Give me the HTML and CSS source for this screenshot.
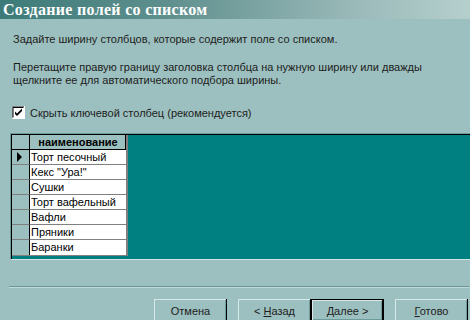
FILE: index.html
```html
<!DOCTYPE html>
<html lang="ru">
<head>
  <meta charset="UTF-8">
  <title>Создание полей со списком</title>
  <link rel="stylesheet" href="styles.css">
</head>
<body>
  <div class="window">
    <div class="titlebar">Создание полей со списком</div>
    <div class="content">
      <p class="hint first">Задайте ширину столбцов, которые содержит поле со списком.</p>
      <p class="hint">Перетащите правую границу заголовка столбца на нужную ширину или дважды<br>щелкните ее для автоматического подбора ширины.</p>
      <label class="check">
        <svg class="box" width="13" height="13" viewBox="0 0 13 13">
          <rect x="0" y="0" width="13" height="13" fill="#fff"/>
          <path d="M0 12.5V0.5H12.5" stroke="#808080" fill="none"/>
          <path d="M1 11.5V1.5H11.5" stroke="#000" fill="none"/>
          <path d="M0.5 13V12.5H12.5V0" stroke="#fff" fill="none"/>
          <path d="M3 5.5l2 2 5-5v2.5l-5 5-2-2z" fill="#000"/>
        </svg>
        <span>Скрыть ключевой столбец (рекомендуется)</span>
      </label>
    </div>

    <div class="grid-wrap">
      <div class="grid">
        <div class="sheet">
          <div class="row head">
            <div class="sel"></div>
            <div class="cell">наименование</div>
          </div>
          <div class="row">
            <div class="sel current"><span class="arrow"></span></div>
            <div class="cell">Торт песочный</div>
          </div>
          <div class="row"><div class="sel"></div><div class="cell">Кекс "Ура!"</div></div>
          <div class="row"><div class="sel"></div><div class="cell">Сушки</div></div>
          <div class="row"><div class="sel"></div><div class="cell">Торт вафельный</div></div>
          <div class="row"><div class="sel"></div><div class="cell">Вафли</div></div>
          <div class="row"><div class="sel"></div><div class="cell">Пряники</div></div>
          <div class="row"><div class="sel"></div><div class="cell">Баранки</div></div>
        </div>
      </div>
    </div>

    <div class="separator"></div>

    <div class="buttons">
      <button class="btn">Отмена</button>
      <div class="pair">
        <button class="btn">&lt; <u>Н</u>азад</button>
        <button class="btn default"><u>Д</u>алее &gt;</button>
      </div>
      <button class="btn"><u>Г</u>отово</button>
    </div>
  </div>
</body>
</html>
```

FILE: styles.css
```css
body {
  margin: 0;
  padding: 0;
  background-color: #9cc0bf;
  font-family: "Liberation Sans", Arial, sans-serif;
  font-size: 11px;
  color: #1c1c1c;
}
.window {
  width: 470px;
  height: 320px;
  overflow: hidden;
  display: flex;
  flex-direction: column;
}
.titlebar {
  height: 19px;
  line-height: 19px;
  padding-left: 3px;
  background: linear-gradient(to right, #3c7b79, #5e8f8d 35%, #99b9b8 75%, #b5cfcd);
  color: #fff;
  font-family: "Liberation Serif", "Times New Roman", serif;
  font-weight: bold;
  font-size: 16px;
  letter-spacing: 0.3px;
  white-space: nowrap;
}
.content {
  padding-left: 13px;
}
.hint {
  margin: 15px 0 0;
  line-height: 13px;
}
.hint.first {
  margin-top: 14px;
}
.check {
  display: flex;
  align-items: center;
  gap: 5px;
  margin-top: 19px;
  margin-left: -1px;
  height: 13px;
}
.box {
  display: block;
}
.grid-wrap {
  margin: 14px 0 0 10px;
  border-top: 1px solid #6b9b9a;
  border-left: 1px solid #6b9b9a;
  border-bottom: 1px solid #d2e4e3;
}
.grid {
  height: 124px;
  background-color: #008080;
  border-top: 1px solid #000;
  border-left: 1px solid #000;
}
.sheet {
  width: 114px;
  border-right: 2px solid #808080;
  border-bottom: 1px solid #808080;
}
.row {
  display: flex;
  height: 15px;
}
.sel {
  width: 18px;
  flex: none;
  background-color: #9cc0bf;
  border-right: 1px solid #000;
  border-bottom: 1px solid #808080;
  box-sizing: border-box;
  display: flex;
  align-items: center;
  padding-left: 5px;
}
.cell {
  flex: 1;
  background-color: #fff;
  color: #000;
  line-height: 14px;
  padding-left: 1px;
  border-bottom: 1px solid #808080;
  white-space: nowrap;
  overflow: hidden;
}
.row:last-child .sel,
.row:last-child .cell {
  border-bottom: none;
}
.head .sel {
  border-bottom: 1px solid #000;
}
.head .cell {
  background-color: #9cc0bf;
  font-weight: bold;
  text-align: center;
  border-bottom: 1px solid #000;
  border-right: 1px solid #000;
}
.arrow {
  width: 0;
  height: 0;
  border-top: 5px solid transparent;
  border-bottom: 5px solid transparent;
  border-left: 5px solid #000;
}
.separator {
  margin: 26px 0 0 9px;
  width: 460px;
  border-top: 1px solid #689796;
  border-bottom: 1px solid #c4dad9;
}
.buttons {
  display: flex;
  margin-top: 11px;
  padding-left: 154px;
  gap: 11px;
}
.pair {
  display: flex;
}
.btn {
  width: 73px;
  height: 23px;
  padding: 0;
  font-family: "Liberation Sans", Arial, sans-serif;
  font-size: 11px;
  color: #1c1c1c;
  background-color: #9cc0bf;
  border: none;
  box-shadow: inset -1px -1px #000, inset 1px 1px #d8e8e7, inset -2px -2px #6b9b9a;
}
.btn.default {
  box-shadow: inset 0 0 0 1px #000, inset -2px -2px #000, inset 2px 2px #d8e8e7, inset -3px -3px #6b9b9a;
}
.btn u {
  text-decoration: underline;
}
```
